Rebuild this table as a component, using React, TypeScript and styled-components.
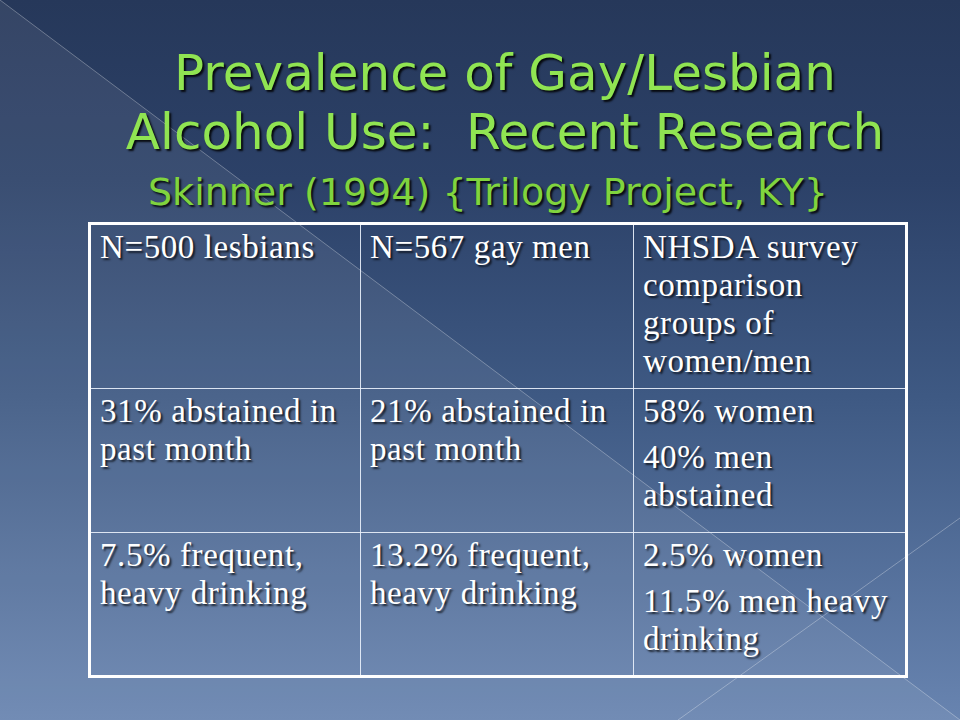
import React from "react";
import styled, { createGlobalStyle } from "styled-components";

const GlobalStyle = createGlobalStyle`
  html, body { margin: 0; padding: 0; background: #263859; }
  #root { width: 960px; height: 720px; }
`;

const Slide = styled.div`
  position: relative;
  width: 960px;
  height: 720px;
  overflow: hidden;
  background: linear-gradient(180deg, #26385a 0%, #2c4168 25%, #3e5983 55%, #6884b0 100%);
  font-family: "Liberation Serif", "Times New Roman", serif;
`;

const Backdrop = styled.svg`
  position: absolute;
  inset: 0;
  width: 960px;
  height: 720px;
  pointer-events: none;
`;

const Content = styled.div`
  position: relative;
  display: flex;
  flex-direction: column;
  padding-top: 44px;
`;

const Title = styled.h1`
  margin: 0;
  padding-left: 50px;
  font-family: "DejaVu Sans", "Liberation Sans", sans-serif;
  font-weight: normal;
  font-size: 50px;
  line-height: 59px;
  text-align: center;
  color: #90e452;
  white-space: pre;
  text-shadow: 2px 2px 2px rgba(0, 0, 0, 0.85);
`;

const Subtitle = styled.h2`
  margin: 8px 0 0;
  padding-left: 16px;
  font-family: "DejaVu Sans", "Liberation Sans", sans-serif;
  font-weight: normal;
  font-size: 38px;
  line-height: 44px;
  text-align: center;
  color: #80d43e;
  text-shadow: 2px 2px 2px rgba(0, 0, 0, 0.85);
`;

const Table = styled.table`
  margin: 8px 0 0 88px;
  width: 817px;
  border-collapse: collapse;
  table-layout: fixed;
  border: 3px solid #ffffff;
`;

const Row = styled.tr<{ $h: number }>`
  height: ${(p) => p.$h}px;
`;

const Cell = styled.td`
  vertical-align: top;
  padding: 3px 10px 4px 9px;
  border: 1px solid rgba(235, 242, 252, 0.9);
  color: #ffffff;
  font-size: 33px;
  line-height: 38px;
  letter-spacing: 0.6px;
  text-shadow: 2px 2px 2px rgba(0, 0, 0, 0.7);
`;

const Para = styled.p`
  margin: 0;
  & + & { margin-top: 8px; }
`;

const rows: { h: number; cells: string[][] }[] = [
  {
    h: 165,
    cells: [
      ["N=500 lesbians"],
      ["N=567 gay men"],
      ["NHSDA survey comparison groups of women/men"],
    ],
  },
  {
    h: 144,
    cells: [
      ["31% abstained in past month"],
      ["21% abstained in past month"],
      ["58% women", "40% men abstained"],
    ],
  },
  {
    h: 144,
    cells: [
      ["7.5% frequent, heavy drinking"],
      ["13.2% frequent, heavy drinking"],
      ["2.5% women", "11.5% men heavy drinking"],
    ],
  },
];

export default function App() {
  return (
    <>
      <GlobalStyle />
      <Slide>
        <Backdrop viewBox="0 0 960 720">
          <polygon points="0,0 960,720 0,720" fill="rgba(255,255,255,0.07)" />
          <line x1="0" y1="0" x2="960" y2="720" stroke="rgba(255,255,255,0.3)" strokeWidth="1" />
          <line x1="960" y1="518" x2="678" y2="720" stroke="rgba(255,255,255,0.3)" strokeWidth="1" />
        </Backdrop>
        <Content>
          <Title>{"Prevalence of Gay/Lesbian\nAlcohol Use:  Recent Research"}</Title>
          <Subtitle>Skinner (1994) {"{"}Trilogy Project, KY{"}"}</Subtitle>
          <Table>
            <colgroup>
              <col style={{ width: 271 }} />
              <col style={{ width: 273 }} />
              <col style={{ width: 273 }} />
            </colgroup>
            <tbody>
              {rows.map((r, i) => (
                <Row key={i} $h={r.h}>
                  {r.cells.map((paras, j) => (
                    <Cell key={j}>
                      {paras.map((t, k) => (
                        <Para key={k}>{t}</Para>
                      ))}
                    </Cell>
                  ))}
                </Row>
              ))}
            </tbody>
          </Table>
        </Content>
      </Slide>
    </>
  );
}
